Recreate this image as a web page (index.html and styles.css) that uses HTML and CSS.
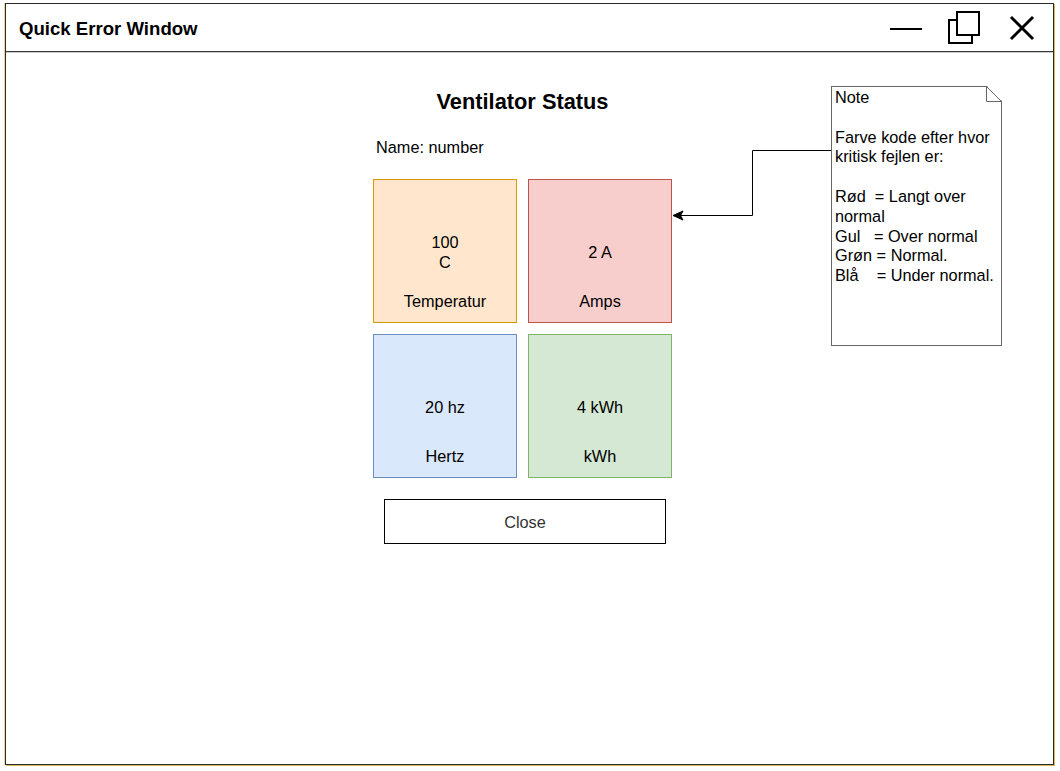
FILE: index.html
```html
<!DOCTYPE html>
<html lang="da">
<head>
<meta charset="utf-8">
<title>Quick Error Window</title>
<link rel="stylesheet" href="styles.css">
</head>
<body>
<div class="window">
  <div class="titlebar">
    <div class="title">Quick Error Window</div>
    <div class="controls">
      <svg class="ctl-min" width="34" height="6" viewBox="0 0 34 6"><line x1="1" y1="3" x2="33" y2="3" stroke="#000" stroke-width="2"/></svg>
      <svg class="ctl-max" width="34" height="34" viewBox="0 0 34 34"><rect x="10" y="2" width="22" height="23" fill="#fff" stroke="#000" stroke-width="2"/><path d="M10 10 H2 V33 H25 V25" fill="none" stroke="#000" stroke-width="2"/></svg>
      <svg class="ctl-close" width="26" height="26" viewBox="0 0 26 26"><path d="M2 2 L24 24 M24 2 L2 24" stroke="#000" stroke-width="3"/></svg>
    </div>
  </div>
  <div class="content">
    <div class="column">
      <h1 class="heading">Ventilator Status</h1>
      <div class="name">Name: number</div>
      <div class="tiles">
        <div class="tile tile-orange"><div class="value">100<br>C</div><div class="label">Temperatur</div></div>
        <div class="tile tile-red"><div class="value">2 A</div><div class="label">Amps</div></div>
        <div class="tile tile-blue"><div class="value">20 hz</div><div class="label">Hertz</div></div>
        <div class="tile tile-green"><div class="value">4 kWh</div><div class="label">kWh</div></div>
      </div>
      <div class="close-row"><button class="close-btn">Close</button></div>
    </div>
    <svg class="connector" width="180" height="80" viewBox="0 0 180 80">
      <path d="M159.5 14.5 H80.5 V79.5 H8" fill="none" stroke="#000" stroke-width="1"/>
      <path d="M1 79.5 L11 75 L8.5 79.5 L11 84 Z" fill="#000" stroke="#000" stroke-width="1"/>
    </svg>
    <div class="note">
      <svg class="fold" width="16" height="16" viewBox="0 0 16 16"><path d="M0.5 0.5 L15.5 15.5" stroke="#666" stroke-width="1" fill="none"/><path d="M0.5 0 V15.5 H16" stroke="#666" fill="none"/></svg>
      <div class="note-text">Note

Farve kode efter hvor
kritisk fejlen er:

Rød  = Langt over
normal
Gul   = Over normal
Grøn = Normal.
Blå    = Under normal.</div>
    </div>
  </div>
</div>
</body>
</html>
```

FILE: styles.css
```css
* { box-sizing: border-box; }
html, body { margin: 0; padding: 0; background: #fff; }
body {
  font-family: "Liberation Sans", Arial, Helvetica, sans-serif;
  color: #000;
  width: 1060px;
  height: 771px;
  overflow: hidden;
}
.window {
  margin: 3px 0 0 5px;
  width: 1049px;
  height: 762px;
  border: 1.5px solid #2a2a2a;
  box-shadow: 1px 1px 0 #d6b656, -1px 0 0 rgba(214,182,86,0.6);
  display: flex;
  flex-direction: column;
  background: #fff;
}
.titlebar {
  height: 48px;
  border-bottom: 1.5px solid #3a3a3a;
  box-shadow: 0 1px 0 rgba(150,150,150,0.5);
  display: flex;
  align-items: center;
  justify-content: space-between;
  padding: 0 18px 0 13px;
}
.title {
  font-weight: bold;
  font-size: 18.6px;
  padding-top: 2px;
}
.controls {
  display: flex;
  align-items: center;
}
.ctl-min { margin-right: 24px; margin-top: 2px; }
.ctl-max { margin-right: 28px; margin-top: -1px; }
.ctl-close { margin-top: 1px; }
.content {
  position: relative;
  flex: 1;
}
.column {
  width: 299px;
  margin-left: 367px;
  padding-top: 38px;
}
.heading {
  margin: 0;
  font-size: 21.8px;
  line-height: 24px;
  font-weight: bold;
  text-align: center;
}
.name {
  margin-top: 24px;
  padding-left: 3px;
  font-size: 16.3px;
  line-height: 19px;
}
.tiles {
  margin-top: 22px;
  display: grid;
  grid-template-columns: 144px 144px;
  grid-template-rows: 144px 144px;
  gap: 11px;
}
.tile {
  border: 1px solid;
  display: grid;
  grid-template-rows: 1fr auto 1fr;
  justify-items: center;
  font-size: 16.3px;
  line-height: 20px;
  text-align: center;
}
.tile .value { grid-row: 2; padding-top: 1px; }
.tile .label { grid-row: 3; align-self: end; padding-bottom: 11px; line-height: 20px; }
.tile-orange { background: #ffe6cc; border-color: #d79b00; }
.tile-red { background: #f8cecc; border-color: #b85450; }
.tile-blue { background: #dae8fc; border-color: #6c8ebf; }
.tile-green { background: #d5e8d4; border-color: #82b366; }
.close-row {
  margin-top: 21px;
  padding-left: 11px;
}
.close-btn {
  width: 282px;
  height: 45px;
  background: #fff;
  border: 1px solid #000;
  border-radius: 0;
  font-family: "Liberation Sans", Arial, sans-serif;
  font-size: 16.3px;
  color: #333;
  padding: 2px 0 0 0;
}
.connector {
  position: absolute;
  left: 666px;
  top: 84px;
  overflow: visible;
}
.note {
  position: absolute;
  left: 825px;
  top: 34px;
  width: 171px;
  height: 260px;
  background: #fff;
  border: 1px solid #666;
  clip-path: polygon(0 0, calc(100% - 15px) 0, 100% 15px, 100% 100%, 0 100%);
}
.fold {
  position: absolute;
  right: -1px;
  top: -1px;
}
.note-text {
  white-space: pre;
  font-size: 16.3px;
  line-height: 19.8px;
  padding: 1px 0 0 3px;
}
```
